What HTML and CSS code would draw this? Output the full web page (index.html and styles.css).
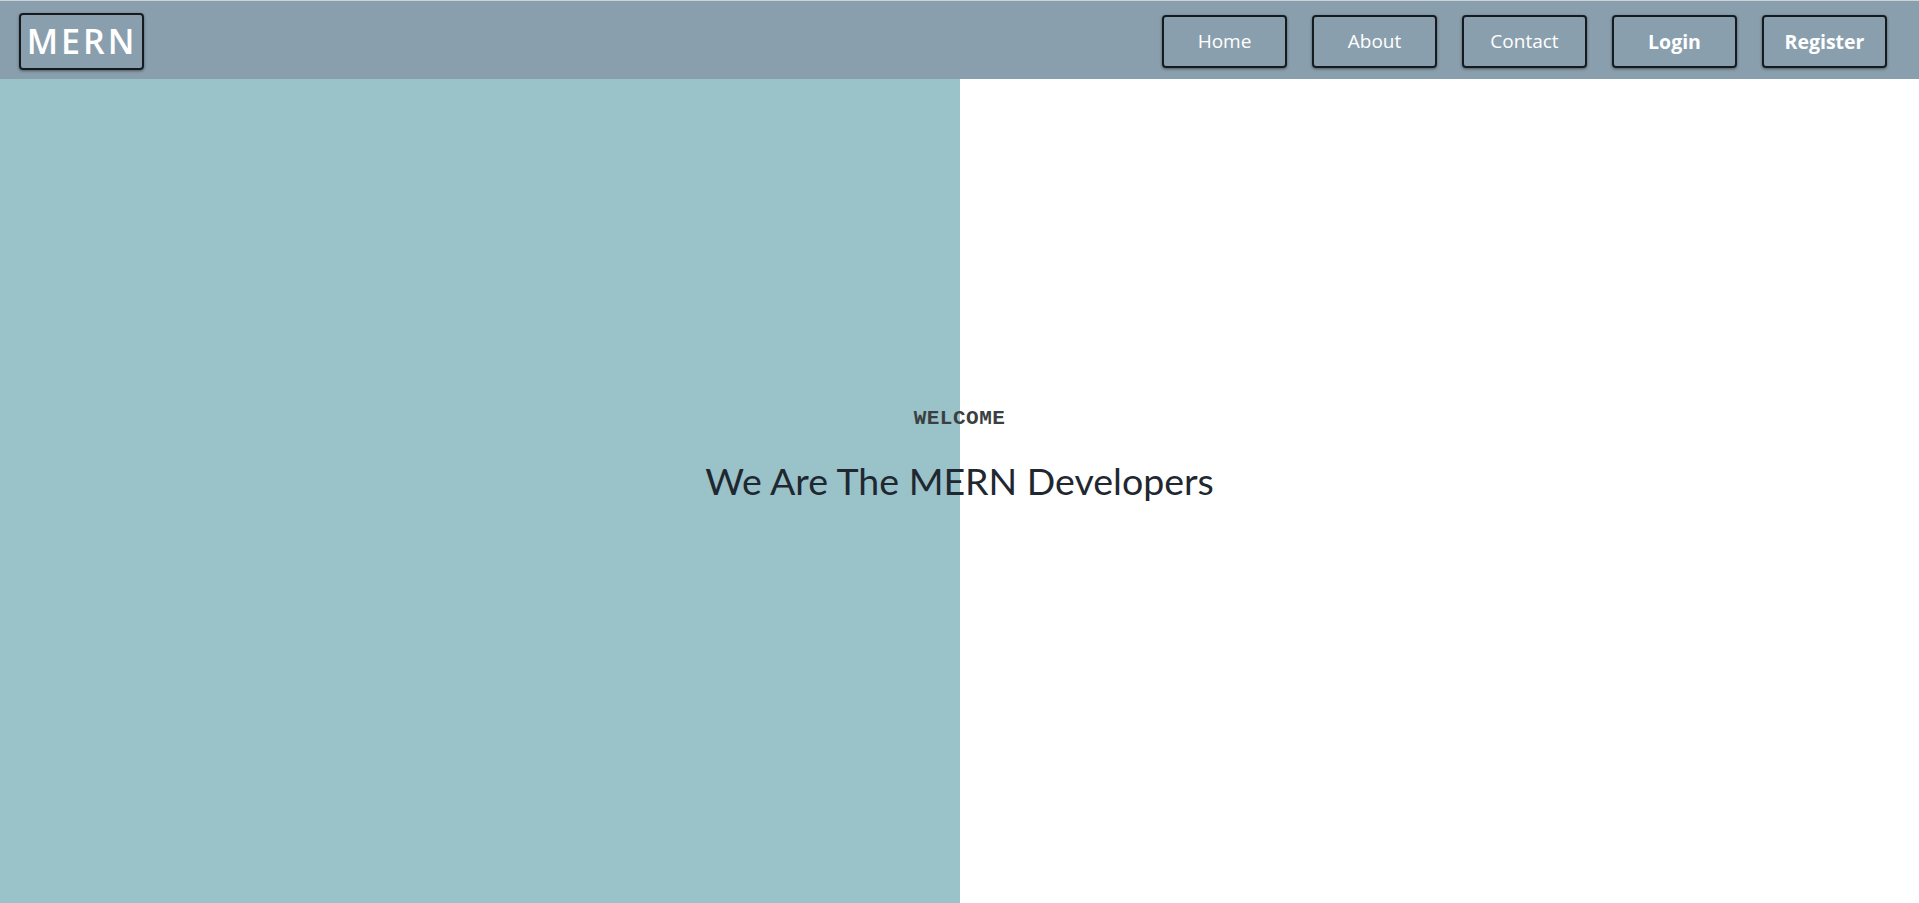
FILE: index.html
```html
<!DOCTYPE html>
<html lang="en">
<head>
<meta charset="utf-8">
<title>MERN</title>
<link rel="stylesheet" href="styles.css">
</head>
<body>
<div class="page">
  <nav class="navbar">
    <a class="brand" href="#">MERN</a>
    <ul class="nav-links">
      <li><a class="nav-btn" href="#">Home</a></li>
      <li><a class="nav-btn" href="#">About</a></li>
      <li><a class="nav-btn" href="#">Contact</a></li>
      <li><a class="nav-btn bold" href="#">Login</a></li>
      <li><a class="nav-btn bold" href="#">Register</a></li>
    </ul>
  </nav>
  <main class="hero">
    <p class="welcome">WELCOME</p>
    <h1 class="title">We Are The MERN Developers</h1>
  </main>
</div>
</body>
</html>
```
FILE: styles.css
```css
* { box-sizing: border-box; }
html, body { margin: 0; padding: 0; }
body { font-family: "Open Sans", "Noto Sans", sans-serif; background: #fff; }

.page {
  height: 100vh;
  display: flex;
  flex-direction: column;
  overflow: hidden;
}

.navbar {
  height: 79px;
  flex: 0 0 auto;
  background: #8a9fae;
  border-top: 1px solid #cdd3d8;
  display: flex;
  align-items: center;
  justify-content: space-between;
  padding: 0 32px 0 19px;
}

.brand {
  width: 125px;
  height: 57px;
  border: 2px solid #151a1e;
  border-radius: 4px;
  box-shadow: 0 1px 3px rgba(0,0,0,0.45);
  display: flex;
  align-items: center;
  justify-content: center;
  color: #fff;
  text-decoration: none;
  font-family: "Open Sans", sans-serif;
  font-weight: 600;
  font-size: 34px;
  letter-spacing: 3px;
  padding-left: 1px;
  margin-top: 2px;
}

.nav-links {
  list-style: none;
  margin: 0;
  padding: 0;
  display: flex;
  gap: 25px;
  margin-top: 2px;
}

.nav-btn {
  width: 125px;
  height: 53px;
  border: 2px solid #151a1e;
  border-radius: 4px;
  box-shadow: 0 1px 3px rgba(0,0,0,0.45);
  display: flex;
  align-items: center;
  justify-content: center;
  color: #fff;
  text-decoration: none;
  font-family: "Open Sans", sans-serif;
  font-size: 19px;
}
.nav-btn.bold { font-weight: 700; font-size: 19.5px; }

.hero {
  flex: 1 1 auto;
  background: linear-gradient(to right, #9ac2c9 0, #9ac2c9 50%, #ffffff 50%, #ffffff 100%);
  display: flex;
  flex-direction: column;
  align-items: center;
  justify-content: center;
  padding-bottom: 72px;
}

.welcome {
  margin: 0;
  font-family: "Liberation Mono", "Courier New", monospace;
  font-weight: bold;
  font-size: 21px;
  color: #3a4042;
  letter-spacing: 0.5px;
}

.title {
  margin: 28px 0 0 0;
  font-family: "Lato", sans-serif;
  font-weight: 400;
  font-size: 37.5px;
  color: #1f2830;
}
```
